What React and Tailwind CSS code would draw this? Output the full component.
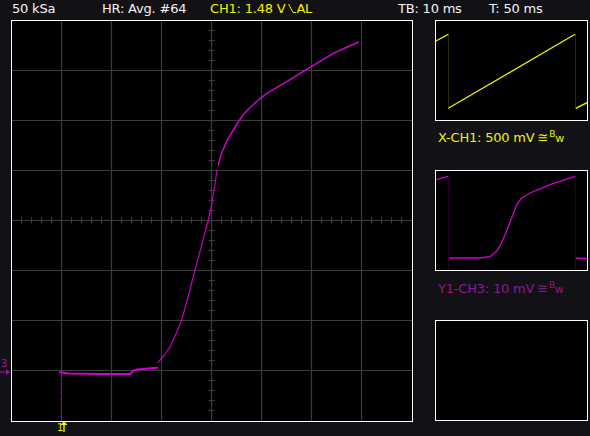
import React from 'react';

const YELLOW = '#f2f200';
const MAGENTA = '#d000d0';

const vLines = [61.5, 111.5, 161.5, 211.5, 261.5, 311.5, 361.5];
const hLines = [70.5, 120.5, 170.5, 220.5, 270.5, 320.5, 370.5];
const ticks = Array.from({ length: 39 }, (_, i) => 21 + i * 10);

const ScopeGrid = () => (
  <g stroke="#3c3c3c" strokeWidth="1.2">
    {vLines.map((x) => (
      <line key={'v' + x} x1={x} y1="21" x2={x} y2="421" />
    ))}
    {hLines.map((y) => (
      <line key={'h' + y} x1="12" y1={y} x2="412" y2={y} />
    ))}
    {ticks.map((t) => (
      <line key={'tx' + t} x1={t + 0.5} y1="217.5" x2={t + 0.5} y2="223.5" />
    ))}
    {ticks.map((t) => (
      <line key={'ty' + t} x1="208.5" y1={t + 9.5} x2="214.5" y2={t + 9.5} />
    ))}
  </g>
);

const MainScreen = () => (
  <div className="w-[402px] h-[402px] border border-white bg-black shrink-0">
    <svg width="400" height="400" viewBox="12 21 400 400" className="block">
      <ScopeGrid />
      {/* trigger marker trace, dotted */}
      <line x1="60.5" y1="374" x2="60.5" y2="421" stroke="#5a0a5a" strokeWidth="1" strokeDasharray="1 5" />
      <g fill="none" stroke={MAGENTA} strokeLinejoin="round" strokeLinecap="round">
        <path
          strokeWidth="2"
          d="M60,372 L68,373.6 L100,374 L130,374 L133,370.8 L137,369.4 L157,367.8"
        />
        <path
          strokeWidth="1.2"
          stroke="#c000c0"
          d="M158,362.3 L164,355.5 L170,346.7 L176,334 L181.7,320 L188,297 L195,270 L202,244 L208.3,220 L212,203 L215,184 L217,170"
        />
        <path
          strokeWidth="1.5"
          d="M218.3,165 L221,155 L225,145 L229,137 L233.3,130 L238,122.5 L242,116.5 L246.7,111 L256,102 L266.7,93.3 L286.7,81.7 L310,67.3 L333.3,53.3 L345,48 L358.3,42.3"
        />
      </g>
    </svg>
  </div>
);

const Panel = ({ viewBox, children }) => (
  <div className="w-[153px] h-[101px] border border-white bg-black">
    <svg width="151" height="99" viewBox={viewBox} className="block">
      {children}
    </svg>
  </div>
);

const BwMark = () => (
  <span className="ml-[3px] inline-flex items-center">
    <span>≅</span>
    <span className="text-[9px] leading-none -mt-[6px] ml-[1px]">B</span>
    <span className="text-[11px] leading-none mt-[2px]">w</span>
  </span>
);

export default function App() {
  return (
    <div className="relative w-[590px] h-[436px] bg-[#121115] overflow-hidden font-['DejaVu_Sans',sans-serif] text-[13px] text-[#f4f4f4]">
      <div className="h-5 flex items-center pl-[12px] tracking-[-0.2px] leading-none pb-[4px]">
        <span className="w-[90px]">50 kSa</span>
        <span className="w-[108px]">HR: Avg. #64</span>
        <span className="w-[188px] flex items-center text-[#f2f200]">
          CH1: 1.48 V
          <svg width="8" height="10" viewBox="0 0 8 10" className="ml-[3px]">
            <path d="M0.5,1 L5,9.5 L8,9.5" fill="none" stroke={YELLOW} strokeWidth="1" />
          </svg>
          AL
        </span>
        <span className="w-[91px]">TB: 10 ms</span>
        <span>T: 50 ms</span>
      </div>

      <div className="flex pl-[11px]">
        <MainScreen />

        <div className="ml-[22px] flex flex-col">
          <Panel viewBox="436 21 151 99">
            <g stroke="#2a2a00" strokeWidth="1">
              <line x1="448.5" y1="34" x2="448.5" y2="108" />
              <line x1="575.5" y1="34" x2="575.5" y2="108" />
            </g>
            <g fill="none" stroke={YELLOW} strokeWidth="1.3">
              <path d="M436,41 L448.3,34.3" />
              <path d="M448.3,108.3 L575,34.3" />
              <path d="M575.7,108.3 L587,102.7" />
            </g>
          </Panel>
          <div className="h-[49px] pt-[7px] pl-[3px] text-[#f2f200] flex items-start tracking-[-0.2px]">
            X-CH1: 500 mV
            <BwMark />
          </div>

          <Panel viewBox="436 171 151 99">
            <g stroke="#2a002a" strokeWidth="1">
              <line x1="448.5" y1="176" x2="448.5" y2="270" />
              <line x1="575.5" y1="176" x2="575.5" y2="270" />
            </g>
            <g fill="none" stroke={MAGENTA} strokeWidth="1.3" strokeLinejoin="round">
              <path d="M436,179.7 L448.3,176.3" />
              <path d="M449.3,258 L479.3,258 L490,256.7 L496.7,251.3 L501,244 L505,234.7 L511.7,218 L516.7,204.7 L521.7,198 L530,193 L540,188.8 L550,184.7 L575,176.3" />
              <path d="M575.7,258 L587,258.7" />
            </g>
          </Panel>
          <div className="h-[49px] pt-[8px] pl-[3px] text-[#8e1a8e] flex items-start tracking-[-0.2px]">
            Y1-CH3: 10 mV
            <BwMark />
          </div>

          <Panel viewBox="436 321 151 99" />
        </div>
      </div>

      {/* channel 3 offset marker */}
      <div className="absolute left-0 top-[359px] flex flex-col text-[#a010a0] leading-none">
        <span className="text-[10px] pl-[1px]">3</span>
        <svg width="11" height="6" viewBox="0 0 11 6">
          <path d="M0,3 L8,3" stroke="#a010a0" strokeWidth="1.2" />
          <path d="M6,0 L10,3 L6,6 Z" fill="#a010a0" />
        </svg>
      </div>

      {/* trigger position marker */}
      <div className="absolute left-[57px] top-[421px] flex items-end text-[#f2f200] leading-none">
        <span className="text-[10px] -mr-[3px]">1</span>
        <svg width="8" height="12" viewBox="0 0 8 12">
          <path d="M4,11 L4,3" stroke={YELLOW} strokeWidth="1.4" />
          <path d="M0.5,4 L4,0 L7.5,4 Z" fill={YELLOW} />
        </svg>
      </div>
    </div>
  );
}
